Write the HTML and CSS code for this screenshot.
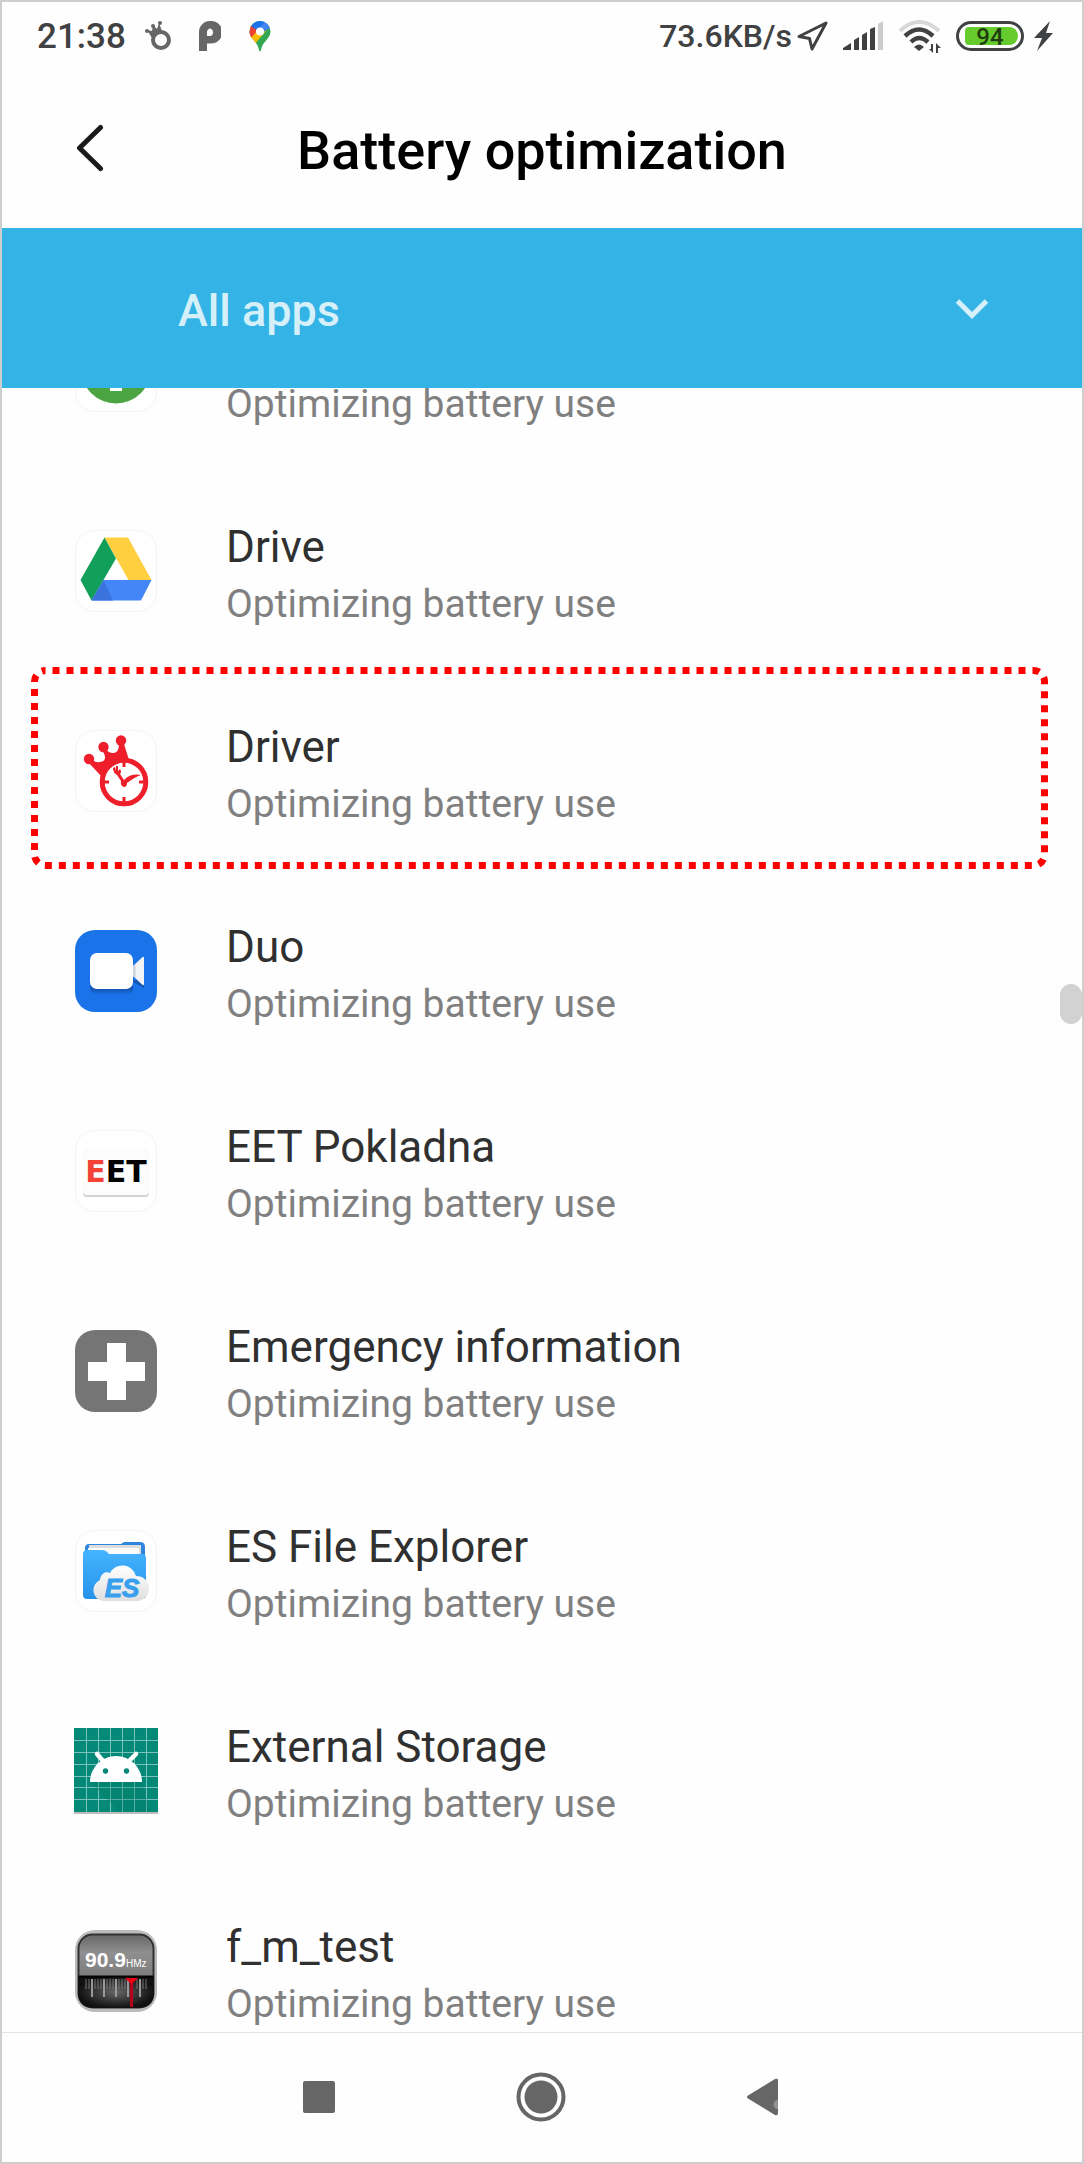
FILE: index.html
```html
<!DOCTYPE html>
<html lang="en">
<head>
<meta charset="utf-8">
<meta name="viewport" content="width=device-width, initial-scale=1">
<title>Battery optimization</title>
<link rel="stylesheet" href="styles.css">
</head>
<body>
<div class="screen">
  <div class="status">
    <span class="clock">21:38</span>
    <div class="notifications">
      <svg width="26" height="30" viewBox="0 0 26 30" aria-hidden="true">
        <circle cx="16" cy="19" r="8" fill="none" stroke="#666" stroke-width="4"/>
        <path d="M2 9 L7 17 L10 12 L17 10 L14 2 L12 8 L8 4 L7 10Z" fill="#666"/>
        <circle cx="2" cy="10" r="2" fill="#666"/><circle cx="8" cy="5" r="2" fill="#666"/><circle cx="15" cy="2" r="2" fill="#666"/>
      </svg>
      <svg width="22" height="30" viewBox="0 0 22 30" aria-hidden="true">
        <path fill="#666" fill-rule="evenodd" d="M0 30V11A11 11 0 0 1 11 0H12A11 11 0 0 1 12 22.500H8V30ZM8 15H11.500A4 4 0 0 0 11.500 7.500A4 4 0 0 0 8 11Z"/>
      </svg>
      <svg width="22" height="31" viewBox="0 0 22 31" aria-hidden="true">
        <clipPath id="pin"><path d="M11 0A10.500 10.500 0 0 0 .5 10.500C.5 18 8.500 20 10 29Q11 32 12 29C13.500 20 21.500 18 21.500 10.500A10.500 10.500 0 0 0 11 0Z"/></clipPath>
        <g clip-path="url(#pin)">
          <path fill="#34a853" d="M0 0H22V31H0Z"/>
          <path fill="#fbbc04" d="M0 16L8 7L17 10L5 24L0 20Z"/>
          <path fill="#ea4335" d="M0 4L3 4L9 9L1 18L0 18Z"/>
          <path fill="#1a73e8" d="M2 5L8 -1H18L9 10Z"/>
          <path fill="#4285f4" d="M16 0L22 0V7L17 9L13 13L9 9Z"/>
        </g>
        <circle cx="11" cy="10.500" r="4" fill="#fff"/>
      </svg>
    </div>
    <div class="indicators">
      <div class="network">
        <span class="speed">73.6KB/s</span>
        <svg width="31" height="31" viewBox="0 0 31 31" aria-hidden="true"><path d="M29 2L15 28L12.500 17.500L2 15.500Z" fill="none" stroke="#404142" stroke-width="3" stroke-linejoin="round"/></svg>
      </div>
      <svg width="40" height="30" viewBox="0 0 40 30" aria-hidden="true">
        <path fill="#404142" d="M0 29V27L8 22V29ZM11 29V19L16 16V29ZM19 29V14L24 11V29ZM27 29V8L32 6V29Z"/>
        <path fill="#ccc" d="M35 29V3L40 0V29Z"/>
      </svg>
      <svg width="43" height="33" viewBox="0 0 43 33" aria-hidden="true">
        <path d="M2 11Q21 -7 41 11" fill="none" stroke="#d8d8d8" stroke-width="4"/>
        <path d="M7 16Q21 3 35 16M13 22Q21 14 30 22" fill="none" stroke="#404142" stroke-width="4.500"/>
        <path fill="#404142" d="M16 27Q21 22 26 27L21 31ZM35 24V33L31 29H33V24ZM38 33V23L43 28H40V33Z"/>
      </svg>
      <div class="power">
        <svg width="68" height="30" viewBox="0 0 68 30" role="img" aria-label="Battery 94 percent">
          <rect x="1.500" y="1.500" width="65" height="27" rx="13.500" fill="#fff" stroke="#404142" stroke-width="3"/>
          <path fill="#66cb2c" d="M13 6H54A8 9 0 0 1 54 24H13Q9 24 9 20V10Q9 6 13 6Z"/>
          <text class="battery-level" x="34" y="24" text-anchor="middle">94</text>
        </svg>
        <svg width="19" height="30" viewBox="0 0 19 30" aria-hidden="true"><path fill="#404142" d="M16 0L0 17H8L3 30L19 12H12Z"/></svg>
      </div>
    </div>
  </div>

  <header class="header">
    <button class="back" aria-label="Back">
      <svg width="28" height="48" viewBox="0 0 28 48" aria-hidden="true"><path d="M24.500 3.500L3.500 24L24.500 44.500" fill="none" stroke="#1a1a1a" stroke-width="5" stroke-linecap="round" stroke-linejoin="round"/></svg>
    </button>
    <h1 class="title">Battery optimization</h1>
  </header>

  <div class="filter">
    <select class="filter-select" aria-label="Show">
      <option>All apps</option>
    </select>
    <svg class="filter-arrow" width="34" height="22" viewBox="0 0 34 22" aria-hidden="true"><path d="M2.500 4L17 18.500L31.500 4" fill="none" stroke="#d6f0fa" stroke-width="5"/></svg>
  </div>

  <main class="content">
    <ul class="apps">
      <li><a class="app" href="#">
        <svg class="icon" viewBox="0 0 82 82" aria-hidden="true"><rect class="tile" x=".5" y=".5" width="81" height="81" rx="19"/><circle cx="41" cy="38.500" r="35" fill="#4aa441"/><path d="M35 25H47V61H35Z" fill="#fff"/></svg>
        <span class="text"><span class="name">&nbsp;</span><span class="state">Optimizing battery use</span></span>
      </a></li>
      <li><a class="app" href="#">
        <svg class="icon" viewBox="0 0 82 82" aria-hidden="true"><rect class="tile" x=".5" y=".5" width="81" height="81" rx="19"/>
          <path fill="#ffcf40" d="M29.500 7.500H53L76.500 50H53.500Z"/>
          <path fill="#119f5a" d="M29.500 7.500L41 28.500L16.500 70.500L5.500 50Z"/>
          <path fill="#4386f7" d="M28.500 50H76.500L66 70.500H16.500Z"/>
          <path fill="#3a73dc" d="M28.500 50L38 70.500H16.500Z"/></svg>
        <span class="text"><span class="name">Drive</span><span class="state">Optimizing battery use</span></span>
      </a></li>
      <li><a class="app" href="#">
        <svg class="icon" viewBox="0 0 82 82" aria-hidden="true"><rect class="tile" x=".5" y=".5" width="81" height="81" rx="19"/>
          <g fill="#ee1f2a"><circle cx="14" cy="29" r="5.200"/><circle cx="28.500" cy="17" r="5.200"/><circle cx="46" cy="10.500" r="5.200"/>
          <path d="M13 32L27 47L49 52L54 30L49 14L44 14Q44 23 38 23Q33 23 30 18L27 20Q33 29 27 31.500Q21 34 17 29Z"/></g>
          <circle cx="49" cy="52" r="21.800" fill="#fff" stroke="#ee1f2a" stroke-width="5"/>
          <path d="M49 32V37M49 67V72M29 52H34M64 52H69" stroke="#ee1f2a" stroke-width="3"/>
          <path fill="#ee1f2a" d="M46 51L42 45Q38 43 38 38L40 37L41 41L41 36L43 36L43 41L45 39Q47 42 45 44L49 50Q56 43 66 45Q60 47 52 53Q52 57 49 57Q45 56 46 51Z"/></svg>
        <span class="text"><span class="name">Driver</span><span class="state">Optimizing battery use</span></span>
        <svg class="highlight" aria-hidden="true"><rect class="highlight-line" x="3.500" y="3.500" rx="11"/></svg>
      </a></li>
      <li><a class="app" href="#">
        <svg class="icon" viewBox="0 0 82 82" aria-hidden="true">
          <linearGradient id="duo-shade" x2="0" y2="1"><stop offset=".6" stop-color="#1455b5"/><stop offset="1" stop-color="#1a73e8"/></linearGradient>
          <rect width="82" height="82" rx="20" fill="#1a73e8"/>
          <path fill="url(#duo-shade)" d="M15 50H69V58L58 52V60Q57 65 50 65H23Q15 64 15 56Z"/>
          <path fill="#f1f3f4" d="M58 36L67 27.500Q69 26 69 28V54Q69 56 67 54.500L58 46Z"/><path fill="#cfd4da" d="M58 36L60.500 34V48L58 46Z"/>
          <rect x="15" y="23" width="43" height="36" rx="7" fill="#fff"/></svg>
        <span class="text"><span class="name">Duo</span><span class="state">Optimizing battery use</span></span>
      </a></li>
      <li><a class="app" href="#">
        <svg class="icon" viewBox="0 0 82 82" aria-hidden="true"><rect class="tile" x=".5" y=".5" width="81" height="81" rx="19"/>
          <rect x="8" y="21" width="66" height="46" rx="4" fill="#d2d2d2"/><rect x="8" y="18" width="66" height="47" rx="4" fill="#fcfcfc"/>
          <text class="eet" x="41" y="52" text-anchor="middle"><tspan fill="#f44336">E</tspan>ET</text></svg>
        <span class="text"><span class="name">EET Pokladna</span><span class="state">Optimizing battery use</span></span>
      </a></li>
      <li><a class="app" href="#">
        <svg class="icon" viewBox="0 0 82 82" aria-hidden="true"><rect width="82" height="82" rx="20" fill="#757575"/><path fill="#fff" d="M32 13H51V32H70V51H51V70H32V51H13V32H32Z"/></svg>
        <span class="text"><span class="name">Emergency information</span><span class="state">Optimizing battery use</span></span>
      </a></li>
      <li><a class="app" href="#">
        <svg class="icon" viewBox="0 0 82 82" aria-hidden="true"><rect class="tile" x=".5" y=".5" width="81" height="81" rx="19"/>
          <linearGradient id="folder" x2="0" y2="1"><stop stop-color="#47b4ff"/><stop offset="1" stop-color="#2492ea"/></linearGradient>
          <linearGradient id="cloud" x2="0" y2="1"><stop stop-color="#fff"/><stop offset="1" stop-color="#dfdfdf"/></linearGradient>
          <path fill="#2f86dc" d="M10 18Q10 14 14 14H46L49 12H65Q70 12 70 17V40H10Z"/>
          <path fill="#ddd" d="M14 15H66V32H14Z"/><path fill="#fafafa" d="M13 18H64V32H13Z"/>
          <path fill="url(#folder)" d="M8 24Q8 20 12 20H27Q31 20 34 24H67Q71 24 71 28V65Q71 69 67 69H12Q8 69 8 65Z"/>
          <path fill="url(#cloud)" d="M28 71A11 11 0 0 1 25 50A7 8 0 0 1 35 43A14 14 0 0 1 61 46A12.500 12.500 0 0 1 62 71Z"/>
          <text class="es" x="47" y="67" text-anchor="middle">ES</text></svg>
        <span class="text"><span class="name">ES File Explorer</span><span class="state">Optimizing battery use</span></span>
      </a></li>
      <li><a class="app" href="#">
        <svg class="icon" viewBox="0 0 82 82" aria-hidden="true">
          <rect x="-1" y="0" width="84" height="84" fill="#bdbdbd"/><rect x="-1" y="-2" width="84" height="84" fill="#048878"/>
          <path d="M11.500 -2V82M23.500 -2V82M35.500 -2V82M47.500 -2V82M59.500 -2V82M71.500 -2V82M-1 10.500H83M-1 22.500H83M-1 34.500H83M-1 46.500H83M-1 57.500H83M-1 69.500H83" stroke="#7cc4bb"/>
          <path fill="#037868" opacity=".3" d="M15 52H67L75 82H45Z"/>
          <path fill="#fff" d="M15 52A26 26 0 0 1 67 52Z"/><path d="M29 32L22 24M53 32L61 24" stroke="#fff" stroke-width="4.500" stroke-linecap="round"/>
          <circle cx="30.500" cy="41" r="2.700" fill="#048878"/><circle cx="51.500" cy="41" r="2.700" fill="#048878"/></svg>
        <span class="text"><span class="name">External Storage</span><span class="state">Optimizing battery use</span></span>
      </a></li>
      <li><a class="app" href="#">
        <svg class="icon" viewBox="0 0 82 82" aria-hidden="true">
          <linearGradient id="radio-top" x2="0" y2="1"><stop stop-color="#666"/><stop offset=".25" stop-color="#8f8f8f"/><stop offset="1" stop-color="#666"/></linearGradient>
          <radialGradient id="radio-dial"><stop stop-color="#666"/><stop offset="1" stop-color="#111"/></radialGradient>
          <rect width="82" height="82" rx="20" fill="#bbb"/>
          <rect x="3.500" y="4.500" width="75" height="73" rx="14" fill="url(#radio-top)" stroke="#333" stroke-width="2"/>
          <path fill="url(#radio-dial)" d="M3 46H79V64Q78 77 65 78H17Q4 77 3 64Z"/>
          <path d="M4 46.500H78" stroke="#000" stroke-width="2"/>
          <path d="M11 49V59M14 49V59M20 49V59M23 49V59M26 49V59M32 49V59M35 49V59M38 49V59M44 49V59M47 49V59M50 49V59M62 49V59M68 49V59M71 49V59" stroke="#777"/>
          <path d="M17 49V67M29 49V67M41 49V67M53 49V67M65 49V67" stroke="#999" stroke-width="2"/>
          <path fill="#b9001a" d="M55 50H58V77H55Z"/><path fill="#ed0015" d="M50 48H63L58 53H55Z"/>
          <text class="freq" x="10" y="37">90.9</text><text class="unit" x="51" y="37">HMz</text></svg>
        <span class="text"><span class="name">f_m_test</span><span class="state">Optimizing battery use</span></span>
      </a></li>
    </ul>
    <div class="scroll-thumb"></div>
  </main>

  <nav class="nav" aria-label="System">
    <button class="nav-button" aria-label="Recent apps"><svg width="32" height="32" viewBox="0 0 32 32"><rect width="32" height="32" rx="2" fill="#666"/></svg></button>
    <button class="nav-button" aria-label="Home"><svg width="50" height="50" viewBox="0 0 50 50"><circle cx="25" cy="25" r="22.500" fill="none" stroke="#666" stroke-width="4"/><circle cx="25" cy="25" r="16.500" fill="#666"/></svg></button>
    <button class="nav-button" aria-label="Back"><svg width="32" height="38" viewBox="0 0 32 38"><path fill="#666" d="M1 17.500L28 1Q31 0 31 2V35Q31 38 28 37L1 20.500Q-1 19 1 17.500Z"/><path fill="#919191" d="M31 22A4 4 0 0 0 31 31Z"/></svg></button>
  </nav>
</div>
</body>
</html>
```
FILE: styles.css
```css
* {
  box-sizing: border-box;
}

body {
  margin: 0;
  font-family: Roboto, "Liberation Sans", sans-serif;
  background: #fefefe;
}

button {
  padding: 0;
  border: 0;
  background: none;
}

svg {
  display: block;
  flex: none;
}

.screen {
  display: flex;
  flex-direction: column;
  height: 100vh;
  border: 2px solid #cecece;
}

.status {
  display: flex;
  flex: none;
  align-items: center;
  height: 68px;
  padding: 0 29px 0 35px;
  color: #404142;
  font-weight: 500;
}

.clock {
  font-size: 35px;
}

.speed {
  font-size: 32px;
}

.notifications {
  display: flex;
  align-items: center;
  gap: 28px;
  margin-left: 19px;
}

.indicators {
  display: flex;
  align-items: center;
  gap: 15px;
  margin-left: auto;
}

.network {
  display: flex;
  align-items: center;
  gap: 5px;
}

.power {
  display: flex;
  gap: 10px;
}

.battery-level {
  font-size: 24px;
  font-weight: 500;
  fill: #1f3d0e;
}

.header {
  display: grid;
  flex: none;
  grid-template-columns: 1fr auto 1fr;
  align-items: center;
  height: 158px;
  padding: 0 74px 2px;
}

.back {
  justify-self: start;
}

.title {
  margin: 0;
  padding-top: 4px;
  font-size: 54px;
  font-weight: 500;
  color: #000;
}

.filter {
  display: grid;
  flex: none;
  align-items: center;
  height: 160px;
  background: #34b4e6;
}

.filter-select {
  grid-area: 1 / 1;
  width: 100%;
  height: 100%;
  padding: 4px 0 0 176px;
  border: 0;
  appearance: none;
  background: none;
  color: #d6f0fa;
  font: 500 45px Roboto, "Liberation Sans", sans-serif;
}

.filter-arrow {
  grid-area: 1 / 1;
  justify-self: end;
  margin-right: 93px;
  pointer-events: none;
}

.content {
  position: relative;
  flex: 1;
  min-height: 0;
  overflow: hidden;
}

/* The list is shown part-way scrolled under the filter bar. */
.apps {
  margin: -117px 0 0;
  padding: 0;
  list-style: none;
}

.app {
  position: relative;
  display: flex;
  align-items: center;
  gap: 69px;
  height: 200px;
  padding-left: 73px;
  color: inherit;
  text-decoration: none;
}

.icon {
  width: 82px;
  height: 82px;
  overflow: visible;
}

.tile {
  fill: #fff;
  stroke: #f3f3f3;
}

.text {
  display: flex;
  flex-direction: column;
  padding-top: 10px;
}

.name {
  color: #303030;
  font-size: 44px;
  line-height: 56px;
}

.state {
  color: #808080;
  font-size: 39px;
  line-height: 58px;
}

.highlight {
  position: absolute;
  top: -4px;
  left: 29px;
  width: calc(100% - 63px);
  height: 202px;
}

.highlight-line {
  width: calc(100% - 7px);
  height: calc(100% - 7px);
  fill: none;
  stroke: #f00;
  stroke-width: 7px;
  stroke-dasharray: 7 7;
  stroke-dashoffset: 7px;
}

.eet {
  font: bold 30px "DejaVu Sans", sans-serif;
}

.es {
  font: italic bold 26px "Liberation Sans", sans-serif;
  fill: #389fee;
  stroke: #389fee;
  stroke-width: 1px;
}

.freq {
  font: bold 21px "Liberation Sans", sans-serif;
  fill: #fff;
}

.unit {
  font: 10px "Liberation Sans", sans-serif;
  fill: #fff;
}

.scroll-thumb {
  position: absolute;
  top: 596px;
  right: 0;
  width: 22px;
  height: 40px;
  border-radius: 11px;
  background: #d2d2d2;
}

.nav {
  display: flex;
  flex: none;
  justify-content: center;
  height: 130px;
  padding: 0 2px 2px 0;
  border-top: 1px solid #e2e2e2;
}

.nav-button {
  display: grid;
  flex: 0 1 222px;
  place-items: center;
}
```
